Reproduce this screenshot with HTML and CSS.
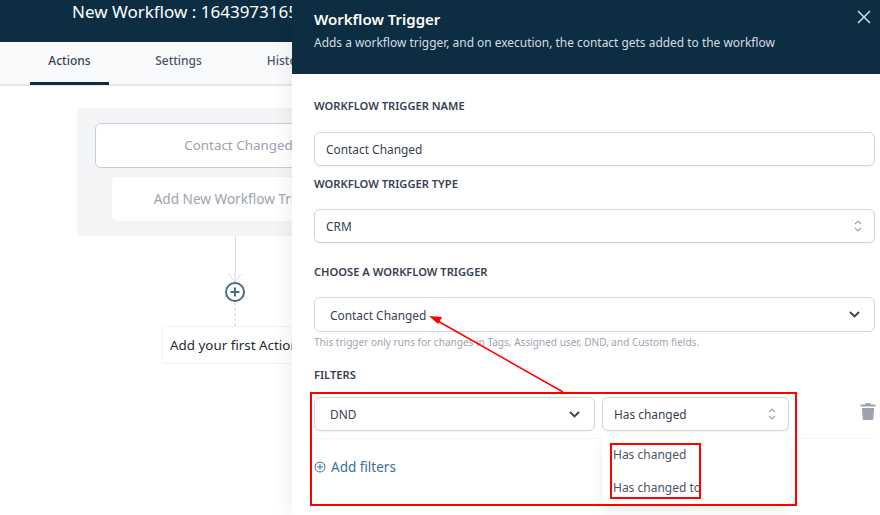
FILE: index.html
```html
<!DOCTYPE html>
<html lang="en">
<head>
    <meta charset="UTF-8">
    <meta name="viewport" content="width=device-width, initial-scale=1.0">
    <title>New Workflow</title>
    <link rel="stylesheet" href="styles.css">
</head>
<body>
    <!-- Workflow page behind the drawer -->
    <div class="app">
        <header class="topbar">New Workflow : 1643973165</header>
        <nav class="tabs">
            <a class="tab active">Actions</a>
            <a class="tab">Settings</a>
            <a class="tab">History</a>
        </nav>
        <main class="canvas">
            <div class="trigger-box">
                <div class="trigger-item">Contact Changed</div>
                <div class="trigger-add">Add New Workflow Trigger</div>
            </div>
            <div class="line"></div>
            <svg class="add-node" width="22" height="54" viewBox="0 0 22 54">
                <path d="M11 0v10M5 2l6 8 6-8" fill="none" stroke="#d5dae3" stroke-width="1"/>
                <circle cx="11" cy="20" r="9" fill="#fff" stroke="#4b6a8f" stroke-width="2"/>
                <path d="M11 15.5v9M6.500 20h9" stroke="#4b6a8f" stroke-width="2"/>
                <path d="M11 31v23" stroke="#cfd3da" stroke-dasharray="3 2"/>
            </svg>
            <div class="action-box">Add your first Action</div>
        </main>
    </div>

    <!-- Drawer -->
    <aside class="drawer">
        <div class="drawer-head">
            <div>
                <h3>Workflow Trigger</h3>
                <p>Adds a workflow trigger, and on execution, the contact gets added to the workflow</p>
            </div>
            <svg class="close" width="16" height="16" viewBox="0 0 16 16">
                <path d="M2 2l12 12M14 2L2 14" stroke="#d5dde3" stroke-width="1.500"/>
            </svg>
        </div>
        <div class="drawer-body">
            <label>Workflow Trigger Name</label>
            <div class="field name-field">Contact Changed</div>

            <label class="type-label">Workflow Trigger Type</label>
            <div class="field type-field">CRM
                <svg class="updown" width="10" height="16" viewBox="0 0 10 16"><path d="M2 6l3-3 3 3M2 10l3 3 3-3" fill="none" stroke="#9ca3af" stroke-width="1.200"/></svg>
            </div>

            <label class="choose-label">Choose a Workflow Trigger</label>
            <div class="field choose-field">Contact Changed
                <svg class="chev" width="11" height="7" viewBox="0 0 11 7"><path d="M1 1l4.500 4.500L10 1" fill="none" stroke="#374151" stroke-width="1.800"/></svg>
            </div>
            <p class="hint">This trigger only runs for changes in Tags, Assigned user, DND, and Custom fields.</p>

            <label class="filters-label">Filters</label>
            <div class="filter-row">
                <div class="field dnd-field">DND
                    <svg class="chev" width="11" height="7" viewBox="0 0 11 7"><path d="M1 1l4.500 4.500L10 1" fill="none" stroke="#374151" stroke-width="1.800"/></svg>
                </div>
                <div class="field op-field">Has changed
                    <svg class="updown" width="10" height="16" viewBox="0 0 10 16"><path d="M2 6l3-3 3 3M2 10l3 3 3-3" fill="none" stroke="#9ca3af" stroke-width="1.200"/></svg>
                </div>
                <svg class="trash" width="16" height="17" viewBox="0 0 16 17">
                    <path d="M6 0h4l1 1.500h4.500V3.500H.5V1.500H5zM1.800 5h12.400l-1 11c0 .6-.5 1-1 1H3.800c-.5 0-1-.4-1-1z" fill="#9ca3af"/>
                </svg>
            </div>
            <a class="add-filters">
                <svg width="12" height="12" viewBox="0 0 12 12"><circle cx="6" cy="6" r="5" fill="none" stroke="#3b6e8f"/><path d="M6 3v6M3 6h6" stroke="#3b6e8f"/></svg>
                Add filters
            </a>
            <ul class="menu">
                <li>Has changed</li>
                <li>Has changed to</li>
            </ul>
        </div>
    </aside>

    <!-- Red annotations drawn on top of the screenshot -->
    <div class="mark mark-outer"></div>
    <div class="mark mark-inner"></div>
    <svg class="mark-arrow" width="880" height="515" viewBox="0 0 880 515">
        <path d="M563 392L436 320" stroke="#f00" stroke-width="1.500"/>
        <path d="M429 316l13 1-4 7z" fill="#f00"/>
    </svg>
</body>
</html>
```

FILE: styles.css
```css
* {
    box-sizing: border-box;
}

html, body {
    height: 515px;
    overflow: hidden;
}

body {
    background-color: #ffffff;
    color: #374151;
    font-family: "Noto Sans", "Open Sans", Arial, sans-serif;
    margin: 0;
    position: relative;
}

/* Page behind */
.topbar {
    background-color: #0d2d42;
    color: #ffffff;
    font-size: 17px;
    height: 42px;
    padding: 0 0 0 72px;
    white-space: nowrap;
}

.tabs {
    background-color: #f9fafb;
    border-bottom: 2px solid #e5e7eb;
    display: flex;
    height: 44px;
    padding-left: 30px;
}

.tab {
    color: #4b5563;
    font-size: 12px;
    font-weight: 500;
    height: 43px;
    line-height: 38px;
    text-align: center;
    width: 79px;
    margin-right: 30px;
}

.tab.active {
    border-bottom: 3px solid #0d2d42;
    color: #374151;
}

.canvas {
    display: flex;
    flex-direction: column;
    align-items: center;
    width: 470px;
    padding-top: 22px;
}

.trigger-box {
    background-color: #f3f4f6;
    border-radius: 6px;
    width: 316px;
    height: 128px;
    padding-top: 15px;
}

.trigger-item {
    background-color: #ffffff;
    border: 1px solid #c7ccd6;
    border-radius: 6px;
    color: #9ca3af;
    font-size: 13.400px;
    height: 45px;
    line-height: 43px;
    margin: 0 11px 0 18px;
    text-align: center;
}

.trigger-add {
    background-color: #ffffff;
    border: 1px dotted #e5e7eb;
    border-radius: 6px;
    color: #9ca3af;
    font-size: 13.600px;
    height: 46px;
    line-height: 44px;
    margin: 8px 26px 0 34px;
    text-align: center;
    white-space: nowrap;
}

.line {
    background-color: #d5dae3;
    height: 36px;
    width: 1px;
}

.add-node {
    display: block;
}

.action-box {
    border: 1px dotted #e0e3e8;
    border-radius: 4px;
    color: #1f2937;
    font-size: 13.400px;
    height: 38px;
    line-height: 36px;
    padding: 0 7px;
    width: 146px;
    white-space: nowrap;
}

/* Drawer */
.drawer {
    background-color: #ffffff;
    box-shadow: -6px 0 14px rgba(0, 0, 0, 0.05);
    height: 515px;
    left: 292px;
    position: absolute;
    top: 0;
    width: 588px;
}

.drawer-head {
    background-color: #0d2d42;
    display: flex;
    justify-content: space-between;
    height: 74px;
    padding: 9px 8px 0 22px;
}

.drawer-head h3 {
    color: #ffffff;
    font-size: 15px;
    font-weight: 600;
    line-height: 21px;
    margin: 0;
}

.drawer-head p {
    color: #d5dde3;
    font-size: 11.950px;
    line-height: 18px;
    margin: 4px 0 0;
}

.drawer-body {
    padding: 24px 5px 0 22px;
    position: relative;
}

label {
    color: #374151;
    display: block;
    font-size: 11.150px;
    font-weight: 600;
    line-height: 16px;
    text-transform: uppercase;
}

.field {
    align-items: center;
    background-color: #ffffff;
    border: 1px solid #d1d5db;
    border-radius: 6px;
    box-shadow: 0 1px 2px rgba(0, 0, 0, 0.05);
    color: #374151;
    display: flex;
    font-size: 11.900px;
    height: 34px;
    justify-content: space-between;
    padding: 0 11px 0 11px;
}

.name-field {
    margin-top: 18px;
}

.type-label {
    margin-top: 10px;
}

.type-field {
    margin-top: 17px;
}

.choose-label {
    margin-top: 21px;
}

.choose-field {
    box-shadow: none;
    height: 35px;
    margin-top: 17px;
    padding-left: 15px;
    padding-right: 14px;
}

.hint {
    color: #9ca3af;
    font-size: 10.050px;
    line-height: 16px;
    margin: 2px 0 0;
}

.filters-label {
    margin-top: 17px;
}

.filter-row {
    border-bottom: 1px solid #f3f4f6;
    display: flex;
    gap: 7px;
    align-items: flex-start;
    height: 42px;
    margin-top: 14px;
}

.dnd-field {
    flex: none;
    padding-left: 15px;
    padding-right: 14px;
    width: 281px;
}

.op-field {
    flex: none;
    padding-left: 11px;
    width: 187px;
}

.trash {
    flex: none;
    margin: 6px 0 0 64px;
}

.add-filters {
    align-items: center;
    color: #3b6e8f;
    display: flex;
    font-size: 13.500px;
    gap: 5px;
    margin-top: 19px;
}

.menu {
    background-color: #ffffff;
    border-radius: 0 0 6px 6px;
    box-shadow: 0 6px 12px rgba(0, 0, 0, 0.08);
    font-size: 12px;
    height: 67px;
    left: 310px;
    list-style: none;
    margin: 0;
    padding: 0 0 0 11px;
    position: absolute;
    top: 364px;
    width: 187px;
}

.menu li {
    color: #4b5563;
    line-height: 33px;
}

/* Annotations */
.mark {
    border: 2px solid #f00;
    position: absolute;
}

.mark-outer {
    height: 114px;
    left: 310px;
    top: 392px;
    width: 487px;
}

.mark-inner {
    height: 56px;
    left: 610px;
    top: 443px;
    width: 91px;
}

.mark-arrow {
    left: 0;
    pointer-events: none;
    position: absolute;
    top: 0;
}
```
